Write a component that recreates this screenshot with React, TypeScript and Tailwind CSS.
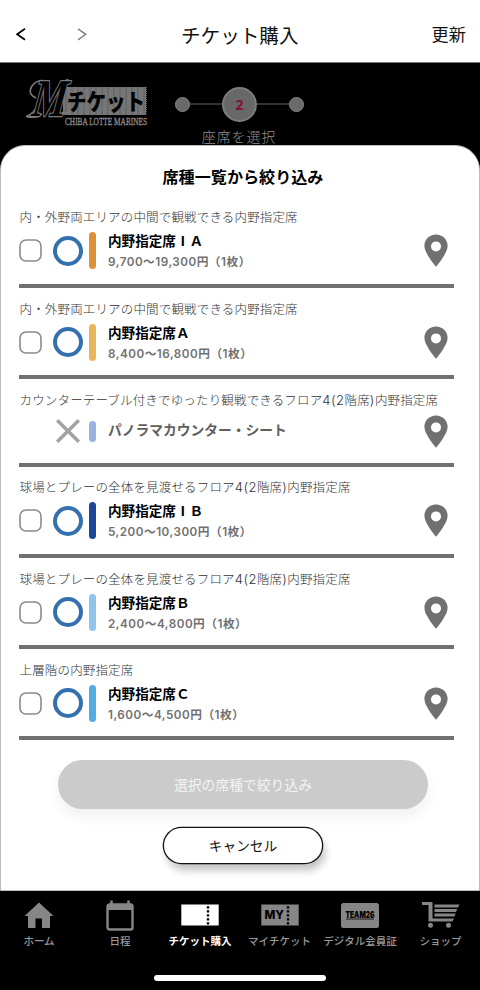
import type { ReactNode } from "react";

type Seat = {
  id: number;
  area: string;
  name: string;
  price?: string;
  bar: string;
};

const seats: Seat[] = [
  {
    id: 1,
    area: "内・外野両エリアの中間で観戦できる内野指定席",
    name: "内野指定席ⅠＡ",
    price: "9,700〜19,300円（1枚）",
    bar: "bg-[#dc9139]",
  },
  {
    id: 2,
    area: "内・外野両エリアの中間で観戦できる内野指定席",
    name: "内野指定席Ａ",
    price: "8,400〜16,800円（1枚）",
    bar: "bg-[#e8b45c]",
  },
  {
    id: 3,
    area: "カウンターテーブル付きでゆったり観戦できるフロア4(2階席)内野指定席",
    name: "パノラマカウンター・シート",
    bar: "bg-[#9ab3dc]",
  },
  {
    id: 4,
    area: "球場とプレーの全体を見渡せるフロア4(2階席)内野指定席",
    name: "内野指定席ⅠＢ",
    price: "5,200〜10,300円（1枚）",
    bar: "bg-[#1f4799]",
  },
  {
    id: 5,
    area: "球場とプレーの全体を見渡せるフロア4(2階席)内野指定席",
    name: "内野指定席Ｂ",
    price: "2,400〜4,800円（1枚）",
    bar: "bg-[#90c4ea]",
  },
  {
    id: 6,
    area: "上層階の内野指定席",
    name: "内野指定席Ｃ",
    price: "1,600〜4,500円（1枚）",
    bar: "bg-[#51addf]",
  },
];

function Logo() {
  return (
    <svg className="shrink-0 overflow-visible" width="126" height="56" viewBox="0 0 126 56">
      <rect x="39" y="10" width="83" height="28" fill="#767676" />
      {Array.from({ length: 14 }).map((_, i) => (
        <path key={i} d={`M${42 + i * 6} 10v28`} stroke="#5e5e5e" strokeWidth="1" />
      ))}
      <path d="M122 10v28" stroke="#767676" strokeWidth="1.5" strokeDasharray="1 1" />
      {/* swashes around the initial */}
      <path d="M12 21Q3 17 8 9Q13 2 23 4M2 39.5Q9 38 15 26M2 39.5Q12 42 18 37" stroke="#7b7b7b" strokeWidth="1.5" fill="none" />
      <path d="M40 5Q44 1 45 4M38 35Q43 39 46 31" stroke="#7b7b7b" strokeWidth="1.5" fill="none" />
      <text
        transform="translate(7 38.5) skewX(-8)"
        fontFamily="Liberation Serif, serif"
        fontSize="53"
        fontStyle="italic"
        fontWeight="700"
        fill="#000"
        stroke="#7b7b7b"
        strokeWidth="2.4"
        paintOrder="stroke"
        textLength="34"
        lengthAdjust="spacingAndGlyphs"
      >
        M
      </text>
      <text
        x="43"
        y="33"
        fontFamily="Noto Sans CJK JP, sans-serif"
        fontSize="23"
        fontWeight="900"
        fill="#000"
        textLength="78"
        lengthAdjust="spacingAndGlyphs"
      >
        チケット
      </text>
      <text
        x="41"
        y="48"
        fontFamily="Liberation Serif, serif"
        fontSize="10.5"
        fill="#8a8a8a"
        stroke="#8a8a8a"
        strokeWidth="0.35"
        textLength="82"
        lengthAdjust="spacingAndGlyphs"
      >
        CHIBA LOTTE MARINES
      </text>
    </svg>
  );
}

function Pin() {
  return (
    <svg className="mr-[6.5px] ml-auto shrink-0" width="24" height="33" viewBox="0 0 24 33">
      <path
        fillRule="evenodd"
        fill="#707070"
        d="M12 .4C5.4.4.4 5.4.4 11.8c0 3.7 2.1 7.5 4.7 11.6 2.4 3.8 4.7 6.7 6.9 9.4 2.2-2.7 4.5-5.6 6.9-9.4 2.6-4.1 4.7-7.9 4.7-11.6C23.6 5.4 18.6.4 12 .4Zm0 7a5 5 0 1 1 0 10 5 5 0 0 1 0-10Z"
      />
    </svg>
  );
}

function SeatRow({ seat }: { seat: Seat }) {
  const open = Boolean(seat.price);
  return (
    <li
      className={`flex flex-col border-b-4 border-[#707070] pt-[11.8px] ${open ? "h-[91.2px]" : "h-[87.6px]"}`}
    >
      <p className="h-[18px] pl-[0.5px] font-['Noto_Sans_CJK_JP',sans-serif] text-[12.5px] leading-[18px] font-light tracking-[0.16px] whitespace-nowrap text-[#333]">
        {seat.area.split(/([0-9(]+|\))/).map((part, i) =>
          /^[0-9()]+$/.test(part) ? (
            <span key={i} className="font-[Inter,sans-serif] text-[13px] tracking-[0.5px]">
              {part}
            </span>
          ) : (
            part
          )
        )}
      </p>
      <div className={`flex items-center ${open ? "mt-[6px] h-[37px]" : "mt-[6px] h-[33px]"}`}>
        {open ? (
          <svg className="shrink-0" width="23" height="23" viewBox="0 0 23 23">
            <rect x="1" y="1" width="21" height="21" rx="6" fill="none" stroke="#8a8a8a" strokeWidth="1.6" />
          </svg>
        ) : (
          <span className="size-[23px] shrink-0" />
        )}
        {open ? (
          <span className="ml-[11px] size-[30px] shrink-0 rounded-full border-4 border-[#3570ae]" />
        ) : (
          <svg className="ml-[11px] shrink-0" width="30" height="30" viewBox="0 0 30 30">
            <path d="M4.2 4.2l21.6 21.6M25.8 4.2L4.2 25.8" stroke="#a3a3a3" strokeWidth="3.6" />
          </svg>
        )}
        <span
          className={`ml-[6px] w-[6.5px] shrink-0 rounded-full ${seat.bar} ${open ? "h-[37px]" : "h-[21px]"}`}
        />
        <div className="ml-[12.5px] whitespace-nowrap">
          <p
            className={`leading-[20px] font-bold ${
              open ? "text-[13.6px] text-black" : "pb-[4px] text-[13.75px] text-[#606060]"
            }`}
          >
            {seat.name}
          </p>
          {open && (
            <p className="mt-[3px] font-[Inter,'Noto_Sans_CJK_JP',sans-serif] text-[11.7px] leading-[18px] font-semibold tracking-[0.5px] text-[#707070]">
              {seat.price}
            </p>
          )}
        </div>
        <Pin />
      </div>
    </li>
  );
}

function NavItem({ label, active, className, children }: { label: string; active?: boolean; className: string; children: ReactNode }) {
  return (
    <div className={`flex shrink-0 flex-col items-center ${className}`}>
      <div className="flex h-[32px] items-center justify-center">{children}</div>
      <span
        className={`mt-[2px] text-[10.5px] leading-[16px] whitespace-nowrap ${
          active ? "font-bold text-white" : "font-medium text-[#999]"
        }`}
      >
        {label}
      </span>
    </div>
  );
}

export default function App() {
  return (
    <div
      lang="ja"
      className="flex h-[990px] w-[480px] flex-col overflow-hidden bg-black font-['Noto_Sans_CJK_JP',sans-serif]"
    >
      {/* Browser header */}
      <header className="flex h-[63px] shrink-0 items-center border-b border-[#777] bg-white pt-[7px] pl-[16px]">
        <svg className="shrink-0" width="10" height="13" viewBox="0 0 10 13" fill="none">
          <path d="M9 .8L1.2 6.3 9 11.8" stroke="#000" strokeWidth="1.7" />
        </svg>
        <svg className="ml-[51px] shrink-0" width="10" height="13" viewBox="0 0 10 13" fill="none">
          <path d="M1 .8l7.8 5.5L1 11.8" stroke="#808080" strokeWidth="1.5" />
        </svg>
        <h1 className="ml-[94px] w-[118px] pt-[1px] text-[19.6px] leading-[24px] font-normal whitespace-nowrap text-[#111]">チケット購入</h1>
        <span className="ml-[132.5px] pb-[2px] text-[17.2px] leading-[20px] whitespace-nowrap text-[#111]">更新</span>
      </header>

      {/* Dimmed page behind the sheet */}
      <div className="flex h-[82px] shrink-0 pt-[14px] pl-[24px]">
        <Logo />
        <div className="ml-[24.5px] flex w-[130px] flex-col items-center">
          <div className="mt-[9.5px] flex items-center">
            <span className="size-[15px] rounded-full border border-[#858585] bg-[#6a6a6a]" />
            <span className="h-[2px] w-[32px] bg-[#333]" />
            <span className="flex size-[35px] items-center justify-center rounded-full border-2 border-[#7d7d7d] bg-[#686868] font-['Open_Sans'] text-[14px] font-bold text-[#7c1230]">
              2
            </span>
            <span className="h-[2px] w-[32px] bg-[#333]" />
            <span className="size-[15px] rounded-full border border-[#858585] bg-[#6a6a6a]" />
          </div>
          <p className="mt-[4px] mr-[1px] text-[14px] leading-[20px] font-light tracking-[0.9px] whitespace-nowrap text-[#909090]">
            座席を選択
          </p>
        </div>
      </div>

      {/* Filter sheet */}
      <section className="flex h-[746px] shrink-0 flex-col rounded-t-[25px] border border-[#bdbdbd] bg-white px-[18px]">
        <h2 className="mt-[18px] pl-[6px] text-center text-[16.1px] leading-[24px] font-bold text-black">
          席種一覧から絞り込み
        </h2>
        <ul className="mt-[8.7px] w-[435px]">
          {seats.map((seat) => (
            <SeatRow key={seat.id} seat={seat} />
          ))}
        </ul>
        <div className="mt-[19.6px] flex flex-col items-center pl-[6px]">
          <button className="h-[49px] w-[370px] rounded-full bg-[#cbcbcb] text-[13.8px] font-normal text-[#f4f4f4] shadow-[0_8px_14px_rgba(0,0,0,0.06)]">
            選択の席種で絞り込み
          </button>
          {/* outline is a ring so that it keeps its width */}
          <button className="mt-[19.5px] h-[35px] w-[158px] rounded-full bg-white pb-[1px] text-[13.7px] text-[#111] shadow-[0_0_0_1.3px_#111,3px_7px_9px_rgba(0,0,0,0.25)]">
            キャンセル
          </button>
        </div>
      </section>

      {/* Bottom tabs */}
      <nav className="flex pt-[8px]">
        <NavItem label="ホーム" className="w-[78px]">
          <svg width="30" height="27" viewBox="0 0 30 27">
            <path d="M15 .5L.5 14H4v12h7.5v-9.5h6.5V26H26V14h3.5Z" fill="#868686" />
          </svg>
        </NavItem>
        <NavItem label="日程" className="w-[84px]">
          <svg width="28" height="31" viewBox="0 0 28 31">
            <path d="M5.5.5v5M22.5.5v5" stroke="#868686" strokeWidth="2.6" />
            <rect x="1.5" y="4.5" width="25" height="25" rx="2" fill="none" stroke="#868686" strokeWidth="2.4" />
            <path d="M1 4h26v6H1z" fill="#868686" />
          </svg>
        </NavItem>
        <NavItem label="チケット購入" active className="w-[76px]">
          <svg width="38" height="22" viewBox="0 0 38 22">
            <path d="M.3.5h37.4v21H.3z" fill="#fff" />
            <path d="M27 2.3v19" stroke="#000" strokeWidth="2.4" strokeDasharray="2.2 1.8" />
          </svg>
        </NavItem>
        <NavItem label="マイチケット" className="w-[83px]">
          <svg width="38" height="22" viewBox="0 0 38 22">
            <path d="M.3.5h37.4v21H.3z" fill="#868686" />
            <path d="M27 2.3v19" stroke="#000" strokeWidth="2.4" strokeDasharray="2.2 1.8" />
            <text x="3.5" y="15.4" fontFamily="Inter, sans-serif" fontSize="11.5" fontWeight="800" textLength="19.5" lengthAdjust="spacingAndGlyphs">
              MY
            </text>
          </svg>
        </NavItem>
        <NavItem label="デジタル会員証" className="w-[78px]">
          <svg width="38" height="25" viewBox="0 0 38 25">
            <rect width="38" height="25" rx="2.5" fill="#868686" />
            <text x="4.5" y="15.2" fontFamily="Inter, sans-serif" fontSize="9" fontWeight="900" textLength="29" lengthAdjust="spacingAndGlyphs">
              TEAM26
            </text>
            <path d="M5 16h28" stroke="#000" strokeWidth="0.8" />
          </svg>
        </NavItem>
        <NavItem label="ショップ" className="w-[83px]">
          <svg width="38" height="26" viewBox="0 0 38 26">
            <path d="M0 0h10.5v16.5H32l-1.6 3H6.5V3H0Z" fill="#868686" />
            <path d="M12.5 2.5h25L36 5.5H12.5ZM12.5 7h22.8l-1.4 3H12.5ZM12.5 11.5h21.2l-1.2 3h-20Z" fill="#868686" />
            <circle cx="8.5" cy="23.2" r="2.5" fill="#868686" />
            <circle cx="26.5" cy="23.2" r="2.5" fill="#868686" />
          </svg>
        </NavItem>
      </nav>
      <div className="mx-auto mt-[25.5px] h-[6px] w-[171.5px] shrink-0 rounded-full bg-white" />
    </div>
  );
}
